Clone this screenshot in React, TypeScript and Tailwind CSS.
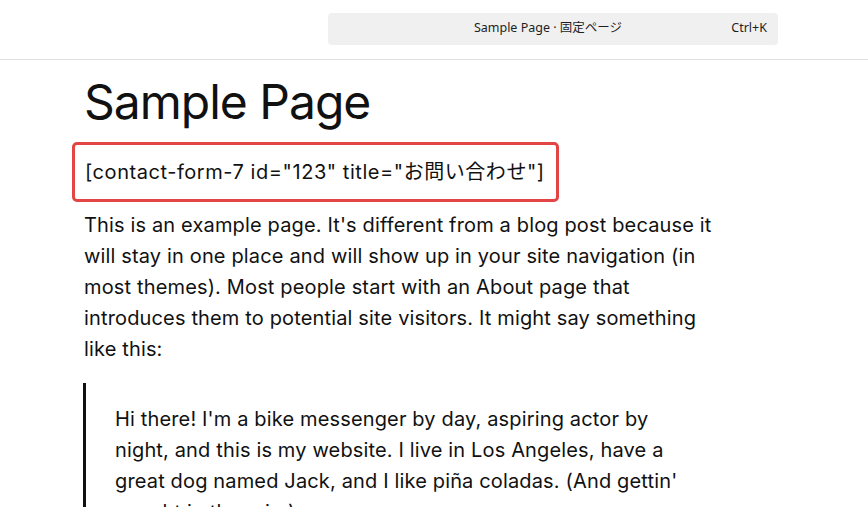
export default function App() {
  const body = "font-['Inter','Noto_Sans_CJK_JP',sans-serif]";
  return (
    <div className="min-h-screen bg-white text-[#111111] overflow-hidden">
      <header className="h-[60px] border-b border-[#e0e0e0] flex items-center">
        <div className="ml-[328px] w-[450px] h-[32px] mt-[-2px] rounded-[4px] bg-[#f0f0f0] flex items-center relative font-['Noto_Sans','Noto_Sans_CJK_JP',sans-serif] text-[12.5px] text-[#1e1e1e]">
          <span className="flex-1 text-center pr-[10px]">Sample Page · 固定ページ</span>
          <span className="absolute right-[11px]">Ctrl+K</span>
        </div>
      </header>

      <main className={`pl-[84px] w-[740px] ${body}`}>
        <h1 className="text-[48px] leading-[1.2] tracking-[-1px] font-normal mt-[13px]">Sample Page</h1>

        <div className="ml-[-12px] mt-[11px] w-[487px] h-[60px] border-[3px] border-[#e34444] rounded-[5px] flex items-center pl-[10px]">
          <p className="text-[20px] tracking-[0.55px] leading-none mt-[1px] whitespace-nowrap">
            [contact-form-7 id="123" title="お問い合わせ"]
          </p>
        </div>

        <p className="mt-[8px] text-[20px] leading-[31px] tracking-[0.15px] w-[640px]">
          This is an example page. It's different from a blog post because it will stay in one place and will show up in
          your site navigation (in most themes). Most people start with an About page that introduces them to potential
          site visitors. It might say something like this:
        </p>

        <blockquote className="mt-[18px] border-l-[3px] border-[#111111] ml-[-1px] pl-[29px] pt-[21px]">
          <p className="text-[20px] leading-[31px] tracking-[0.15px] w-[580px]">
            Hi there! I'm a bike messenger by day, aspiring actor by night, and this is my website. I live in Los
            Angeles, have a great dog named Jack, and I like piña coladas. (And gettin' caught in the rain.)
          </p>
        </blockquote>
      </main>
    </div>
  );
}
